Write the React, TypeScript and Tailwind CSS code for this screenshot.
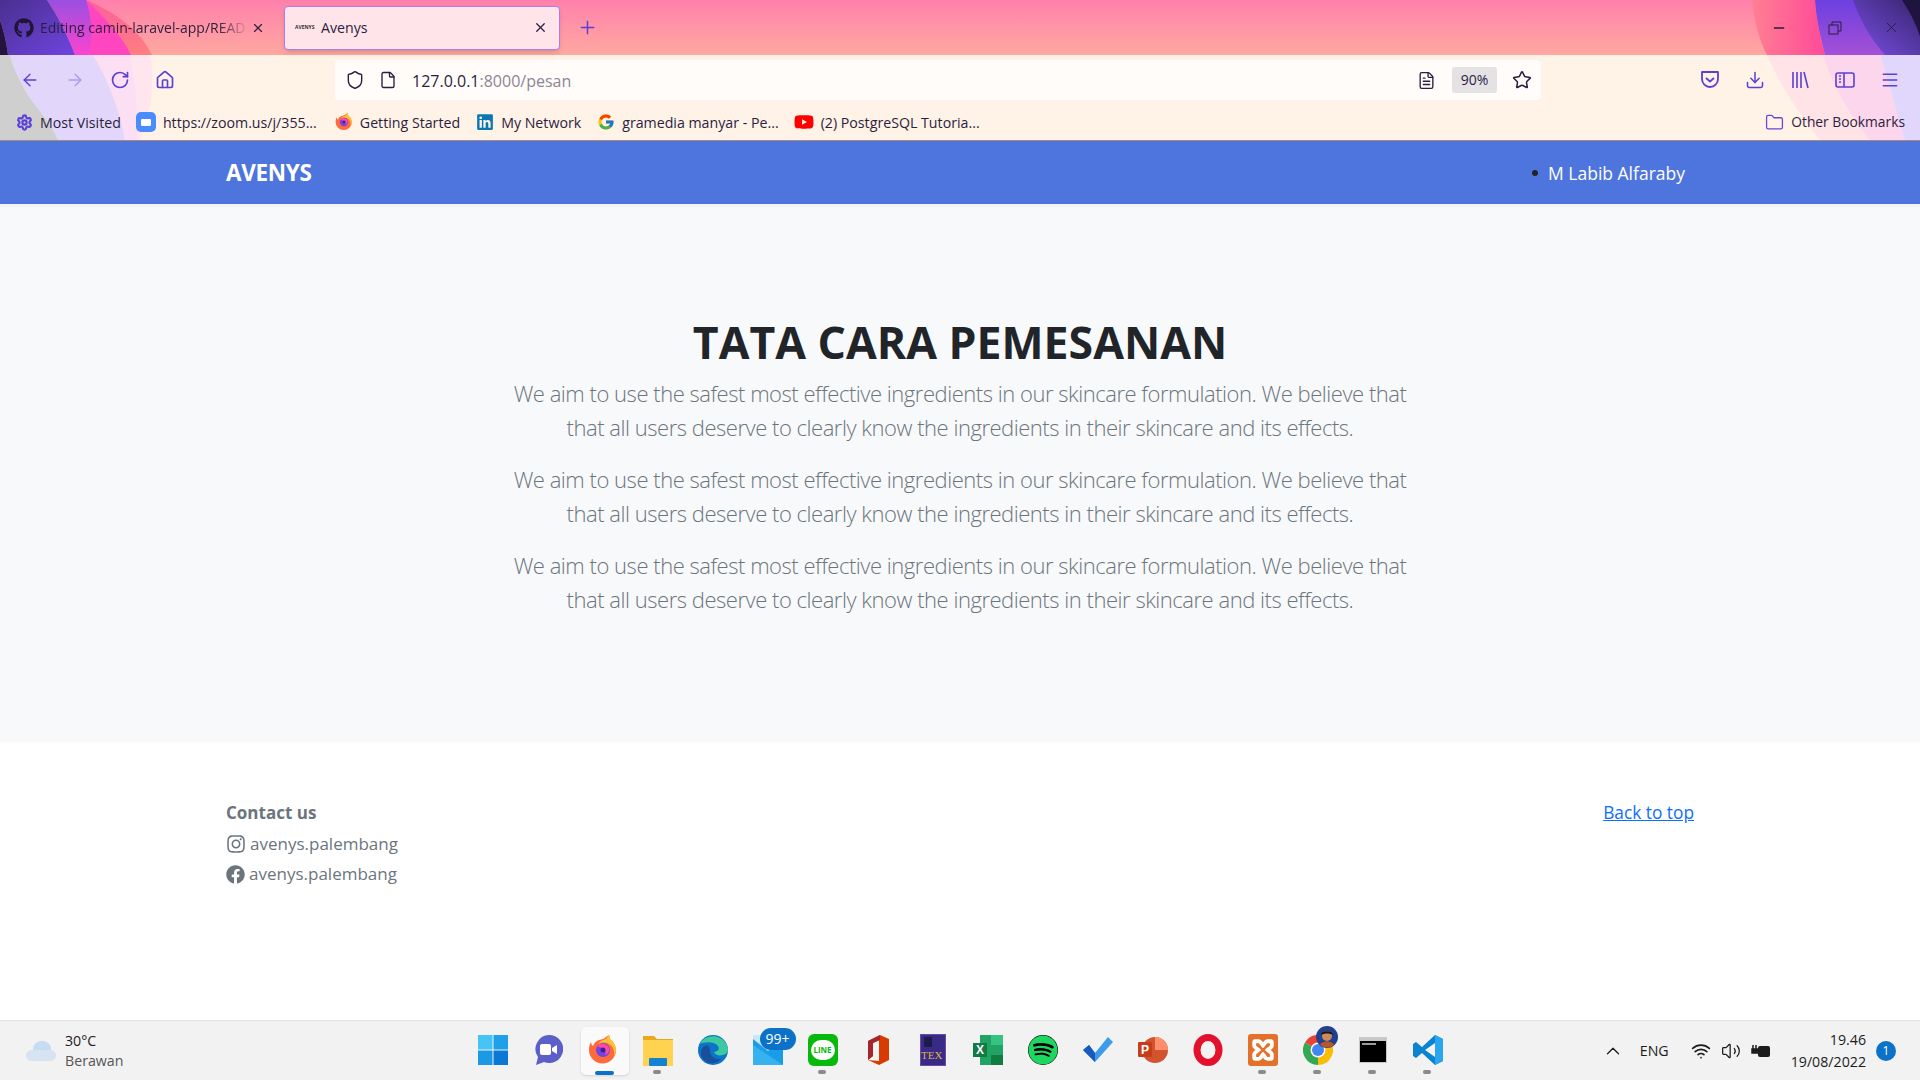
import { ArrowLeft, ArrowRight, RotateCw, Home, Shield, File, Star, FileText, Download, Menu, Folder, X, Plus, Minus, ChevronUp, Wifi, Volume2, Settings } from "lucide-react";
import { FaGithub, FaYoutube, FaLinkedin, FaInstagram, FaFacebook, FaSpotify } from "react-icons/fa";
import { FcGoogle } from "react-icons/fc";

const paragraph =
  "We aim to use the safest most effective ingredients in our skincare formulation. We believe that that all users deserve to clearly know the ingredients in their skincare and its effects.";

const ChromeArtLeft = () => (
  <svg className="absolute left-0 top-0" width="200" height="140" viewBox="0 0 200 140">
    <defs>
      <linearGradient id="la" x1="0" y1="0" x2="0" y2="1">
        <stop offset="0" stopColor="#ff5d9e" />
        <stop offset="1" stopColor="#ff7f80" />
      </linearGradient>
      <linearGradient id="lb" x1="0" y1="0" x2="1" y2="1">
        <stop offset="0" stopColor="#4a2f90" />
        <stop offset="1" stopColor="#6f44e0" />
      </linearGradient>
      <linearGradient id="lc" x1="0" y1="0" x2="0" y2="1">
        <stop offset="0" stopColor="#9a4fe0" />
        <stop offset="1" stopColor="#fb44cf" />
      </linearGradient>
    </defs>
    <path d="M86 0C115 12 140 30 152 55H86Z" fill="url(#la)" />
    <path d="M86 0C105 18 122 36 131 55H90Z" fill="#ff45c0" />
    <path d="M47 0H86C92 18 92 36 90 55H75C68 36 58 16 47 0Z" fill="url(#lc)" />
    <path d="M0 0H47C58 16 68 36 75 55H8C6 40 3 28 0 20Z" fill="url(#lb)" />
    <path d="M0 20C3 28 6 40 8 55H0Z" fill="#24123f" />
    <path d="M93 55H150C156 85 150 115 140 140H125C120 110 108 80 93 55Z" fill="#ffe6ee" />
    <path d="M93 55H130C136 85 138 115 137 140H125C120 110 108 80 93 55Z" fill="#fcdff2" />
    <path d="M10 55H93C108 80 120 110 125 140H58C50 120 33 105 25 90C18 78 13 66 10 55Z" fill="#e2d7fa" />
    <path d="M0 55H10C13 66 18 78 25 90C33 105 50 120 58 140H0Z" fill="#d0cfcf" />
  </svg>
);

const ChromeArtRight = () => (
  <svg className="absolute right-0 top-0" width="200" height="140" viewBox="0 0 200 140">
    <defs>
      <linearGradient id="ra" x1="0" y1="0" x2="1" y2="0">
        <stop offset="0" stopColor="#ff7f92" />
        <stop offset="1" stopColor="#ff4a98" />
      </linearGradient>
      <linearGradient id="rb" x1="0" y1="0" x2="0" y2="1">
        <stop offset="0" stopColor="#6c40e0" />
        <stop offset="1" stopColor="#a450d6" />
      </linearGradient>
      <linearGradient id="rc" x1="1" y1="0" x2="0" y2="1">
        <stop offset="0" stopColor="#38246e" />
        <stop offset="1" stopColor="#7a50e6" />
      </linearGradient>
    </defs>
    <path d="M32 0C34 20 39 40 47 55H105C100 36 96 18 95 0Z" fill="url(#ra)" />
    <path d="M95 0C96 18 100 36 105 55H200V0Z" fill="url(#rb)" />
    <path d="M133 0C140 20 150 38 165 55H200V0Z" fill="url(#rc)" />
    <path d="M182 0C190 12 196 24 200 36V0Z" fill="#1f1340" />
    <path d="M47 55C60 85 80 115 100 140H185C165 110 125 85 103 55Z" fill="#ffe3e6" />
    <path d="M103 55C112 85 130 115 150 140H185C175 110 170 85 160 55Z" fill="#fcd6ec" />
    <path d="M160 55C170 85 175 110 185 140H200V55Z" fill="#e1d7fc" />
  </svg>
);

const Bookmark = ({ icon, label, className }: { icon: React.ReactNode; label: string; className?: string }) => (
  <div className={`flex items-center gap-[7px] ${className ?? ""}`}>
    {icon}
    <span>{label}</span>
  </div>
);

const WinLogo = () => (
  <svg width="30" height="30" viewBox="0 0 30 30">
    <rect width="14.5" height="14.5" fill="#45c4f5" />
    <rect x="15.5" width="14.5" height="14.5" fill="#1ea1e8" />
    <rect y="15.5" width="14.5" height="14.5" fill="#1a9ae5" />
    <rect x="15.5" y="15.5" width="14.5" height="14.5" fill="#0a78d4" />
  </svg>
);

const Firefox = ({ size = 30 }: { size?: number }) => (
  <svg width={size} height={size} viewBox="0 0 30 30">
    <path d="M1 15c0-3 .5-6 2-8 0 2 1 3 2 4 1-3 3-5 6-6 3-1 5-1 7-3l3-2 1 4c3 2 6 7 6 11a13.500 13.500 0 1 1-27 0Z" fill="#ff6a3c" />
    <path d="M21 0l1 4c3 2 6 7 6 11 0 2-1 5-2 6 1-5-1-10-5-12-3-2-8-2-11 0 2-3 5-4 8-5Z" fill="#ffc233" />
    <circle cx="15" cy="15" r="7" fill="#7542e5" />
    <path d="M9 11c3-4 10-3 12 2 1 3-1 6-4 7 1-2 1-4-1-6-2-2-5-1-7-3Z" fill="#ff4aa2" />
    <circle cx="15" cy="15" r="2.500" fill="#3a2290" />
  </svg>
);

const Teams = () => (
  <svg width="30" height="32" viewBox="0 0 30 32">
    <path d="M16 1a14 14 0 1 1-5 27l-8 3 2-8A14 14 0 0 1 16 1Z" fill="#5b5fc7" />
    <rect x="7" y="10" width="11" height="11" rx="2" fill="#fff" />
    <path d="M19 14l5-3v9l-5-3Z" fill="#fff" />
  </svg>
);

const Files = () => (
  <svg width="30" height="32" viewBox="0 0 30 32">
    <path d="M0 2h11l3 3h16v6H0Z" fill="#eaa91c" />
    <rect y="6" width="30" height="26" fill="#ffd24f" />
    <rect x="6" y="24" width="18" height="8" rx="1" fill="#1482d0" />
  </svg>
);

const Edge = () => (
  <svg width="30" height="32" viewBox="0 0 30 32">
    <circle cx="15" cy="16" r="15" fill="#0c74c8" />
    <path d="M2 10C6 1 22-2 29 11c2 5 1 9-4 10-4 1-8 0-9-3 4 0 6-3 4-6-4-5-14-4-18-2Z" fill="#3cc9a0" />
    <path d="M12 17c0 5 5 9 11 8-4 5-13 6-18 0C1 20 3 12 9 11c2 1 3 3 3 6Z" fill="#1a4f9c" />
  </svg>
);

const Mail = () => (
  <div className="relative w-[30px] h-[30px]">
    <svg width="30" height="30" viewBox="0 0 30 30">
      <rect width="30" height="30" fill="#1a9de8" />
      <path d="M0 0H30V4L15 16 0 4Z" fill="#c8e8f8" />
      <path d="M0 30V10L15 20 30 30Z" fill="#35b2ef" />
    </svg>
    <span className="absolute -top-[7px] left-[7px] w-[36px] h-[22px] rounded-full bg-[#0c72c8] text-white text-[14px] leading-[22px] text-center">99+</span>
  </div>
);

const Line = () => (
  <div className="w-[30px] h-[32px] rounded-[6px] bg-[#06b90a] flex items-center justify-center">
    <div className="w-[24px] h-[20px] rounded-full bg-white text-[#06b90a] text-[8px] font-bold leading-[20px] text-center">LINE</div>
  </div>
);

const Office = () => (
  <svg width="24" height="34" viewBox="0 0 24 32">
    <path d="M14 1 23 5V26L13 31 2 26 13 27V6L7 9V22L2 26V7Z" fill="#d83b01" />
    <path d="M2 7 14 1V6L7 9V22L2 26Z" fill="#a4262c" />
  </svg>
);

const Tex = () => (
  <div className="relative w-[26px] h-[32px] bg-[#3a2a88] border border-[#6d4aa8] text-[#d9b93a] text-[11px] font-['Liberation_Serif',serif] leading-none">
    <span className="absolute left-[3px] top-[2px] w-[8px] h-[10px] bg-[#1c1c4a]" />
    <span className="absolute right-[2px] bottom-[4px]">TEX</span>
  </div>
);

const Excel = () => (
  <svg width="30" height="30" viewBox="0 0 30 30">
    <rect x="7" width="23" height="30" fill="#21a366" />
    <rect x="18" width="12" height="10" fill="#33c481" />
    <rect x="18" y="20" width="12" height="10" fill="#107c41" />
    <rect y="8" width="14" height="14" fill="#107c41" />
    <text x="7" y="19" textAnchor="middle" fontSize="12" fontWeight="700" fill="#fff" fontFamily="Liberation Sans, sans-serif">X</text>
  </svg>
);

const Todo = () => (
  <svg width="30" height="26" viewBox="0 0 30 26">
    <path d="M0 13 6 8 12 16 25 0 30 5 12 25Z" fill="#3c9bea" />
    <path d="M0 13 6 8 12 16 12 25Z" fill="#185abd" />
  </svg>
);

const Ppt = () => (
  <svg width="30" height="30" viewBox="0 0 30 30">
    <circle cx="17" cy="15" r="13" fill="#d35230" />
    <path d="M17 2a13 13 0 0 1 13 13H17Z" fill="#ff8f6b" />
    <rect y="7" width="14" height="15" rx="1" fill="#c43e1c" />
    <text x="7" y="19" textAnchor="middle" fontSize="12" fontWeight="700" fill="#fff" fontFamily="Liberation Sans, sans-serif">P</text>
  </svg>
);

const Opera = () => (
  <svg width="30" height="32" viewBox="0 0 30 32">
    <ellipse cx="15" cy="16" rx="11" ry="12.5" fill="none" stroke="#e3112d" strokeWidth="7" />
  </svg>
);

const Xampp = () => (
  <div className="w-[30px] h-[32px] rounded-[3px] bg-[#e3702b] flex items-center justify-center">
    <svg width="22" height="24" viewBox="0 0 20 20" fill="none" stroke="#fff" strokeWidth="3.5">
      <path d="M6 2H3a1 1 0 0 0-1 1v3c0 2 3 3 4 4-1 1-4 2-4 4v3a1 1 0 0 0 1 1h3c2 0 3-3 4-4 1 1 2 4 4 4h3a1 1 0 0 0 1-1v-3c0-2-3-3-4-4 1-1 4-2 4-4V3a1 1 0 0 0-1-1h-3c-2 0-3 3-4 4-1-1-2-4-4-4Z" />
    </svg>
  </div>
);

const Chrome = () => (
  <div className="relative w-[30px] h-[30px]">
    <svg width="30" height="30" viewBox="0 0 30 30">
      <path d="M15 15 2 7.500A15 15 0 0 1 28 7.500Z" fill="#ea4335" />
      <path d="M15 15 2 7.500A15 15 0 0 0 15 30Z" fill="#34a853" />
      <path d="M15 15 28 7.500A15 15 0 0 1 15 30Z" fill="#fbbc04" />
      <circle cx="15" cy="15" r="7.500" fill="#fff" />
      <circle cx="15" cy="15" r="6" fill="#4285f4" />
    </svg>
    <svg className="absolute -top-[9px] left-[13px]" width="22" height="22" viewBox="0 0 22 22">
      <circle cx="11" cy="11" r="11" fill="#23408f" />
      <circle cx="11" cy="10" r="5" fill="#c98a5e" />
      <path d="M5 9c0-5 12-5 12 0-3-2-9-2-12 0Z" fill="#20140f" />
      <path d="M4 19c3-5 11-5 14 0a11 11 0 0 1-14 0Z" fill="#b5562c" />
    </svg>
  </div>
);

const Cmd = () => (
  <div className="w-[28px] h-[26px] bg-black border-t-[4px] border-x border-b border-[#c8c8c8]">
    <div className="mt-[2px] ml-[2px] w-[14px] h-[2px] bg-[#9a9a9a]" />
  </div>
);

const VsCode = () => (
  <svg width="30" height="32" viewBox="0 0 30 30">
    <path d="M22 0 30 4V26L22 30 9 18 3 23 0 21V9L3 7 9 12Z" fill="#0a84d0" />
    <path d="M22 8 12 15 22 22Z" fill="#f2f2f2" />
    <path d="M22 0 30 4V26L22 30Z" fill="#2aa5ef" />
  </svg>
);

const dock: { key: string; icon: React.ReactNode; active?: boolean; dot?: boolean }[] = [
  { key: "start", icon: <WinLogo /> },
  { key: "teams", icon: <Teams /> },
  { key: "firefox", icon: <Firefox />, active: true },
  { key: "files", icon: <Files />, dot: true },
  { key: "edge", icon: <Edge /> },
  { key: "mail", icon: <Mail /> },
  { key: "line", icon: <Line />, dot: true },
  { key: "office", icon: <Office /> },
  { key: "tex", icon: <Tex /> },
  { key: "excel", icon: <Excel /> },
  { key: "spotify", icon: <FaSpotify className="text-[#1ed760] text-[30px] bg-black rounded-full" /> },
  { key: "todo", icon: <Todo /> },
  { key: "ppt", icon: <Ppt /> },
  { key: "opera", icon: <Opera /> },
  { key: "xampp", icon: <Xampp />, dot: true },
  { key: "chrome", icon: <Chrome />, dot: true },
  { key: "cmd", icon: <Cmd />, dot: true },
  { key: "vscode", icon: <VsCode />, dot: true },
];

const App = () => {
  return (
    <div className="h-screen flex flex-col overflow-hidden bg-white font-['Open_Sans',sans-serif]">
      {/* browser chrome */}
      <header className="relative h-[141px] shrink-0 bg-[#fff2e7] border-b border-[#a58b7c] text-[14.2px] text-[#2b1e3f]">
        <div className="absolute inset-x-0 top-0 h-[55px] bg-gradient-to-b from-[#ff80ab] to-[#ffa8a0]" />
        <ChromeArtLeft />
        <ChromeArtRight />

        <div className="relative h-[55px] flex items-center">
          <div className="w-[284px] flex items-center pl-[14px]">
            <FaGithub className="text-[20px] text-[#1f1536] shrink-0" />
            <span className="ml-[6px] w-[209px] whitespace-nowrap text-[14px] [mask-image:linear-gradient(to_right,black_85%,transparent)]">Editing camin-laravel-app/READ</span>
            <X size={14} className="ml-[2px]" />
          </div>
          <div className="w-[276px] h-[44px] flex items-center rounded-[4px] bg-[#ffe4ea] border border-[#a57ff0] shadow-md pl-[10px] pr-[11px]">
            <span className="w-[18px] text-[5px] font-bold leading-none text-[#333]">AVENYS</span>
            <span className="ml-[8px]">Avenys</span>
            <X size={15} className="ml-auto" />
          </div>
          <Plus size={21} strokeWidth={1.7} className="ml-[17px] text-[#5b3fd6]" />
          <div className="ml-auto flex items-center gap-[41px] pr-[20px] text-[#2b1e3f]">
            <Minus size={16} />
            <svg width="14" height="14" viewBox="0 0 14 14" fill="none" stroke="currentColor"><rect x="1" y="4" width="9" height="9" /><path d="M4 4V1h9v9h-3" /></svg>
            <X size={17} strokeWidth={1.3} />
          </div>
        </div>

        <div className="relative h-[50px] flex items-center text-[#5b3fd6]">
          <div className="flex items-center gap-[25px] pl-[20px] w-[335px]">
            <ArrowLeft size={20} strokeWidth={1.6} />
            <ArrowRight size={20} strokeWidth={1.6} className="opacity-40" />
            <RotateCw size={20} strokeWidth={2} />
            <Home size={20} strokeWidth={2} />
          </div>
          <div className="w-[1206px] h-[40px] flex items-center rounded-[4px] bg-[#fffcfa] text-[#2b1e3f] pl-[10px] pr-[9px]">
            <Shield size={20} strokeWidth={1.7} />
            <File size={18} strokeWidth={1.8} className="ml-[14px]" />
            <span className="ml-[15px] mt-[2px] text-[16px]">127.0.0.1<span className="text-[#8d8597]">:8000/pesan</span></span>
            <FileText size={19} strokeWidth={1.7} className="ml-auto" />
            <span className="ml-[16px] w-[45px] h-[26px] rounded-[3px] bg-[#e5e2e6] text-[14px] leading-[26px] text-center">90%</span>
            <Star size={20} strokeWidth={1.8} className="ml-[15px]" />
          </div>
          <div className="ml-auto flex items-center gap-[25px] pr-[20px]">
            <svg width="20" height="20" viewBox="0 0 20 20" fill="none" stroke="currentColor" strokeWidth="1.8"><path d="M2 2h16v7a8 8 0 0 1-16 0Z" strokeLinejoin="round" /><path d="M6 8l4 3.500 4-3.500" /></svg>
            <Download size={20} strokeWidth={1.8} />
            <svg width="20" height="20" viewBox="0 0 20 20" fill="none" stroke="currentColor" strokeWidth="1.6"><path d="M3 2v16M7 2v16M11 2v16M14 2l4 16" /></svg>
            <svg width="20" height="20" viewBox="0 0 20 20" fill="none" stroke="currentColor" strokeWidth="1.6"><rect x="1" y="3" width="18" height="14" rx="2" /><path d="M9 3v14M4 6h2M4 9h2M4 12h2" /></svg>
            <Menu size={20} strokeWidth={1.8} />
          </div>
        </div>

        <div className="relative h-[35px] flex items-center pl-[16px] pr-[15px]">
          <Bookmark icon={<Settings size={17} strokeWidth={3} className="text-[#5b3fd6]" />} label="Most Visited" />
          <Bookmark className="ml-[15px]" icon={<span className="w-[20px] h-[20px] rounded-[5px] bg-[#4a8cff] flex items-center justify-center"><span className="w-[10px] h-[7px] bg-white rounded-[1px]" /></span>} label="https://zoom.us/j/355..." />
          <Bookmark className="ml-[18px]" icon={<Firefox size={18} />} label="Getting Started" />
          <Bookmark className="ml-[16px]" icon={<FaLinkedin className="text-[18px] text-[#0a78b5]" />} label="My Network" />
          <Bookmark className="ml-[16px]" icon={<FcGoogle className="text-[18px]" />} label="gramedia manyar - Pe..." />
          <Bookmark className="ml-[15px]" icon={<FaYoutube className="text-[20px] text-[#f00]" />} label="(2) PostgreSQL Tutoria..." />
          <Bookmark className="ml-auto text-[13.8px]" icon={<Folder size={19} strokeWidth={1.6} className="text-[#6a45d8]" />} label="Other Bookmarks" />
        </div>
      </header>

      {/* site navbar */}
      <nav className="h-[63px] shrink-0 bg-[#4e75dd] flex items-center justify-between pt-[1px] pl-[226px] pr-[235px] text-white">
        <span className="text-[22.5px] font-bold tracking-[-0.3px]">AVENYS</span>
        <span className="flex items-center text-[17.5px] gap-[10px]">
          <span className="w-[6px] h-[6px] rounded-full bg-[#212529]" />
          M Labib Alfaraby
        </span>
      </nav>

      <main className="h-[538px] shrink-0 bg-[#f8f9fa] border-t-[3px] border-[#f1f3f5] flex flex-col items-center pt-[108px] text-center">
        <h1 className="text-[44.6px] font-bold leading-[53px] mb-[8px] text-[#212529]">TATA CARA PEMESANAN</h1>
        <div className="w-[910px]">
          {[0, 1, 2].map((i) => (
            <p key={i} className="text-[22px] font-light leading-[34px] mb-[18px] tracking-[-0.47px] text-[#6c757d]">{paragraph}</p>
          ))}
        </div>
      </main>

      <footer className="flex-1 bg-white flex justify-between pl-[226px] pr-[226px] pt-[56px] text-[17px] leading-[30px] text-[#6c757d]">
        <div>
          <p className="font-bold">Contact us</p>
          <p className="flex items-center gap-[4px] mt-[1px]"><FaInstagram className="text-[20px]" />avenys.palembang</p>
          <p className="flex items-center gap-[4px]"><FaFacebook className="text-[19px]" />avenys.palembang</p>
        </div>
        <a className="text-[17.3px] text-[#0d6efd] underline">Back to top</a>
      </footer>

      {/* windows taskbar */}
      <div className="h-[60px] shrink-0 bg-[#f2f2f2] border-t border-[#e2e2e2] grid grid-cols-[1fr_990px_1fr] items-center text-[14.2px] text-[#1c1c1c]">
        <div className="flex items-center pl-[26px] gap-[9px]">
          <svg width="30" height="20" viewBox="0 0 30 20"><ellipse cx="16" cy="8" rx="9" ry="8" fill="#c6dcf2" /><rect y="9" width="30" height="11" rx="5.500" fill="#d6e4f2" /></svg>
          <div className="leading-[20px]">
            <p>30°C</p>
            <p className="text-[#555]">Berawan</p>
          </div>
        </div>
        <div className="flex h-full">
          {dock.map((d) => (
            <div key={d.key} className="relative w-[55px] h-full flex items-center justify-center">
              {d.active && <span className="absolute left-[6px] top-[6px] w-[48px] h-[48px] rounded-[5px] bg-[#fafafa] shadow-sm" />}
              <span className="relative -mt-[2px] flex">{d.icon}</span>
              {d.active && <span className="absolute left-[20px] bottom-[5px] w-[19px] h-[4px] rounded-full bg-[#0c72c8]" />}
              {d.dot && <span className="absolute left-[23px] bottom-[6px] w-[8px] h-[4px] rounded-full bg-[#8a8a8a]" />}
            </div>
          ))}
        </div>
        <div className="flex items-center justify-end pr-[24px]">
          <ChevronUp size={22} strokeWidth={1.4} />
          <span className="ml-[16px]">ENG</span>
          <Wifi size={20} className="ml-[22px]" />
          <Volume2 size={20} strokeWidth={1.5} className="ml-[10px]" />
          <svg className="ml-[10px]" width="20" height="16" viewBox="0 0 20 16"><rect x="7" y="3" width="12" height="11" rx="2" fill="#1c1c1c" /><path d="M1 6h6v4H1ZM2 2v4M5 2v4" stroke="#1c1c1c" strokeWidth="1.500" fill="#1c1c1c" /></svg>
          <div className="ml-[20px] text-right leading-[22px]">
            <p>19.46</p>
            <p>19/08/2022</p>
          </div>
          <span className="ml-[10px] w-[20px] h-[20px] rounded-full bg-[#0c72c8] text-white text-[12px] leading-[20px] text-center">1</span>
        </div>
      </div>
    </div>
  );
};

export default App;
